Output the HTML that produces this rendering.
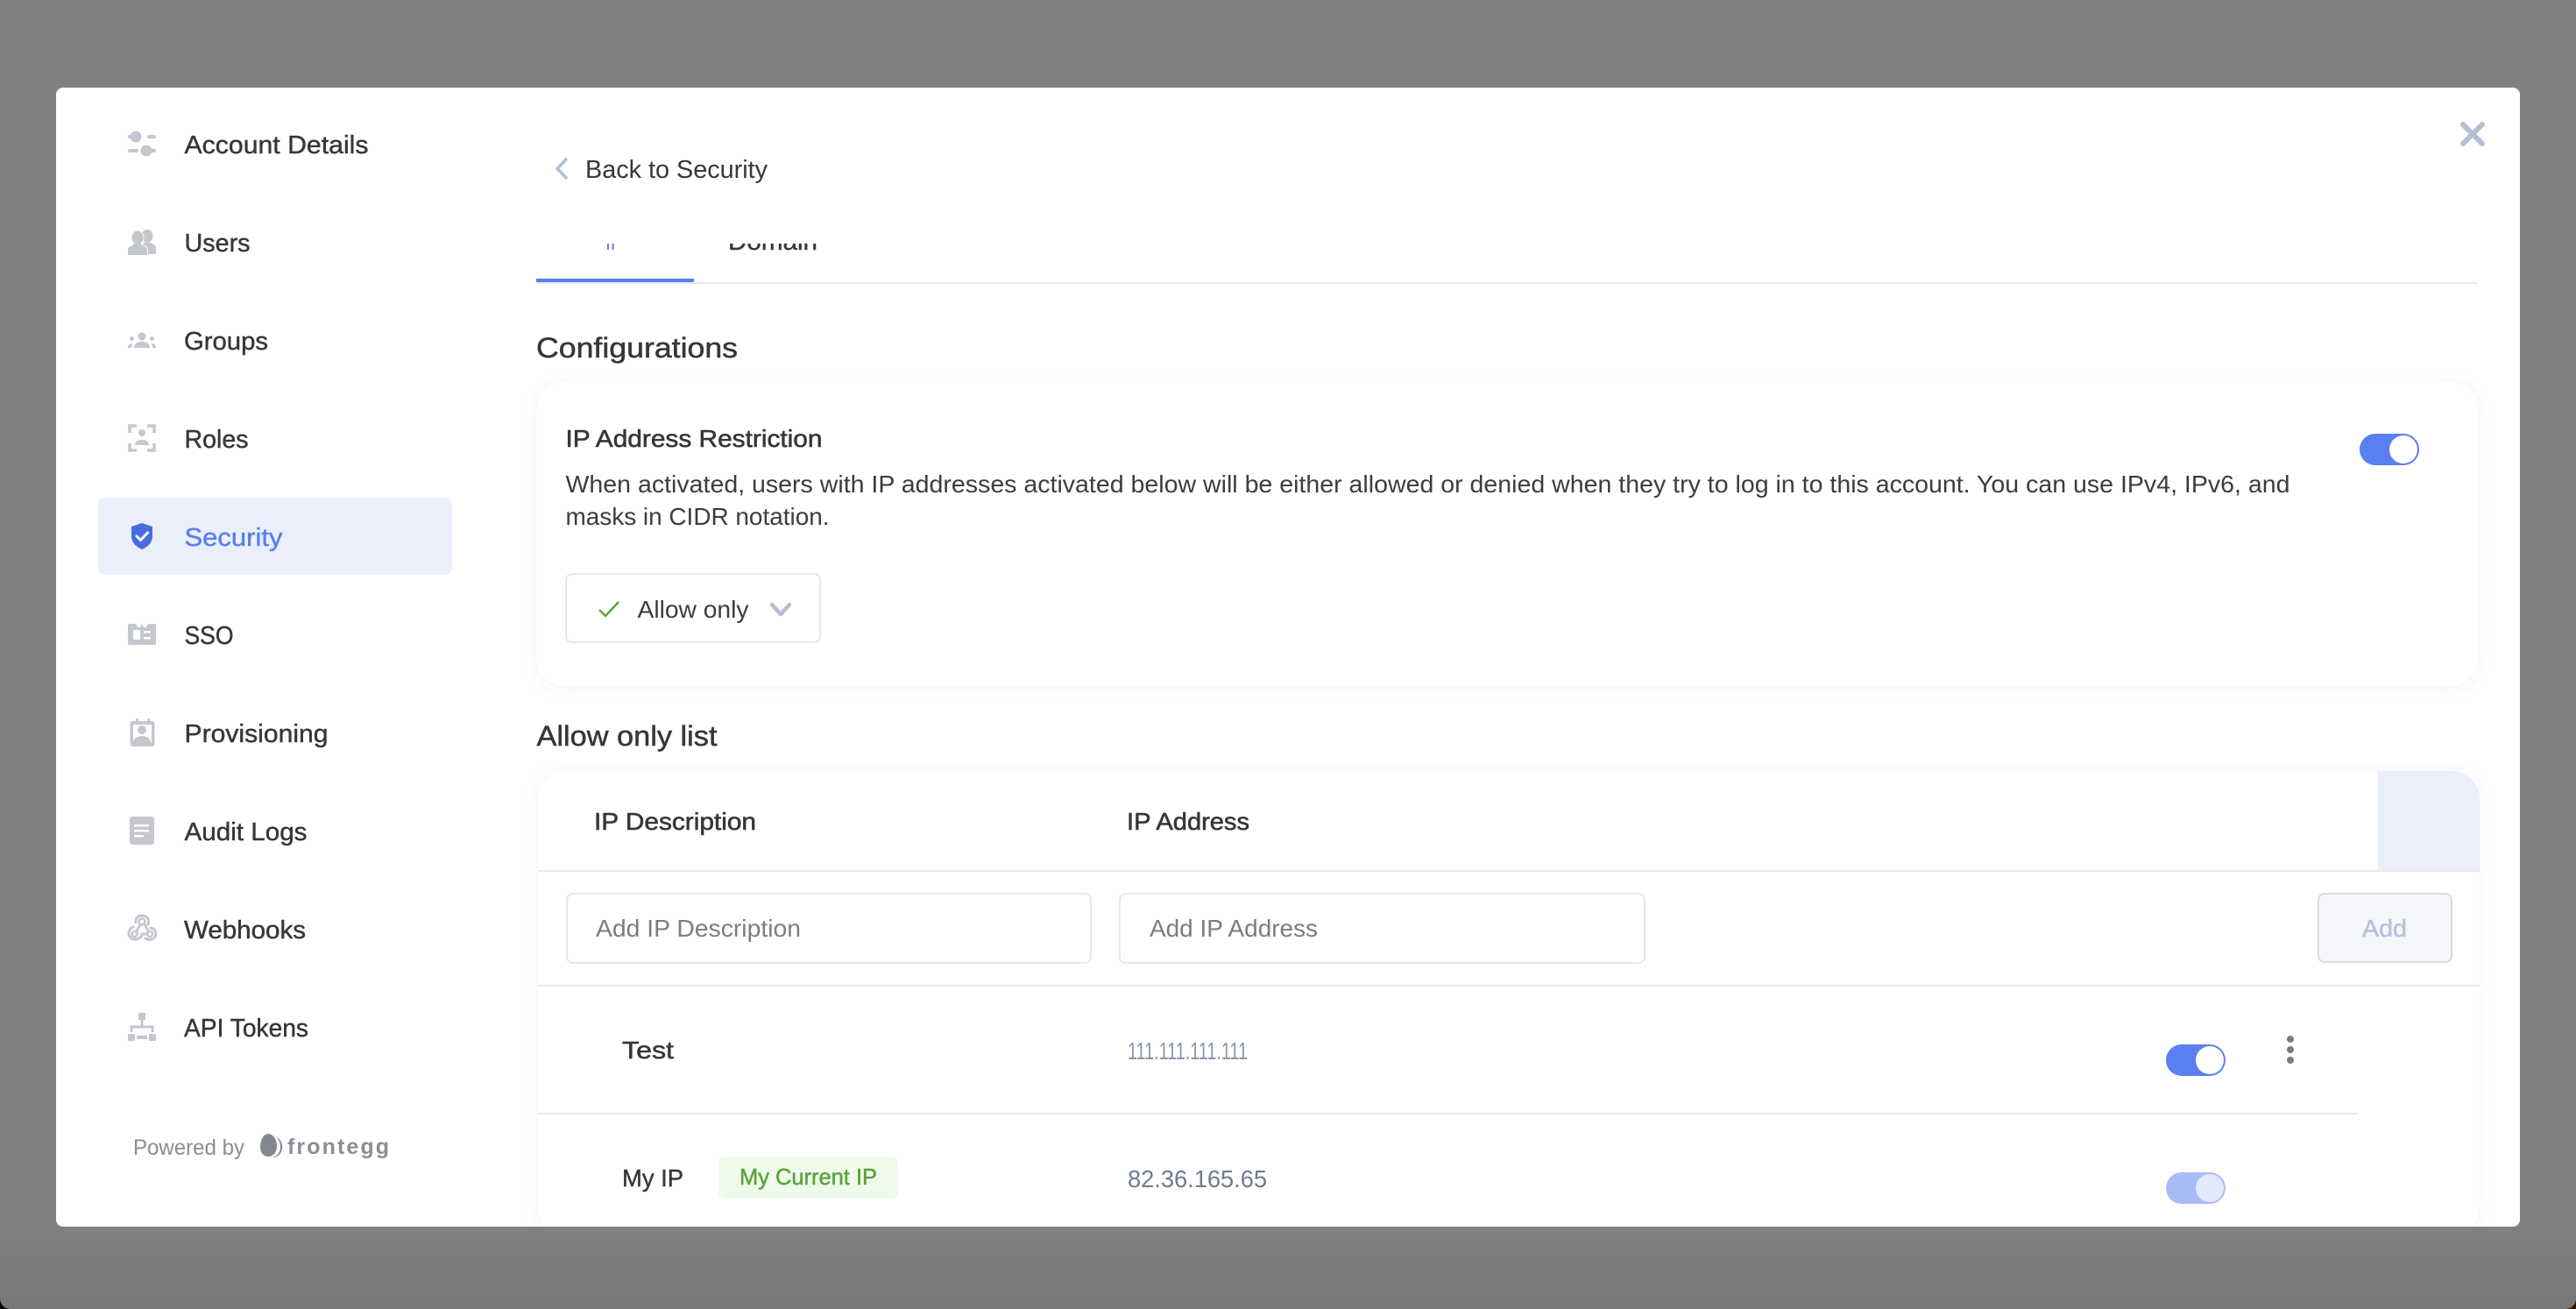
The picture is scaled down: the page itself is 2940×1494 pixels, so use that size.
<!DOCTYPE html>
<html><head><meta charset="utf-8"><title>Security</title>
<style>
html,body{margin:0;padding:0;width:2940px;height:1494px;overflow:hidden;background:#808080}
svg{position:absolute;left:0;top:0;display:block}
text{font-family:"Liberation Sans",Arial,sans-serif;font-size:29px;fill:#37373b;white-space:pre}
.nav{font-size:29px;stroke:#37373b;stroke-width:.45}
.h{font-size:32px;stroke:#37373b;stroke-width:.5}
.b{font-size:28px;stroke:#37373b;stroke-width:.6}
.p{font-size:28px;fill:#3c3c41}
.ph{font-size:28px;fill:#7b7c85}
.ip{font-size:28px;fill:#8a95aa}
.ic{fill:#c5c7cf}
</style></head>
<body>
<svg width="2940" height="1494" viewBox="0 0 2940 1494" xmlns="http://www.w3.org/2000/svg">
<defs>
<linearGradient id="bg" x1="0" y1="0" x2="0" y2="1"><stop offset="0" stop-color="#808080"/><stop offset=".94" stop-color="#808080"/><stop offset="1" stop-color="#787878"/></linearGradient>
<filter id="sh" x="-5%" y="-10%" width="110%" height="120%"><feDropShadow dx="0" dy="2" stdDeviation="8" flood-color="#5a5f78" flood-opacity=".08"/></filter>
<clipPath id="modal"><rect x="64" y="100" width="2812" height="1300" rx="8"/></clipPath>
<clipPath id="tabs"><rect x="600" y="278" width="400" height="20"/></clipPath>
<clipPath id="th"><rect x="614" y="880" width="2216" height="530" rx="32"/></clipPath>
</defs>
<rect width="2940" height="1494" fill="url(#bg)"/>
<path d="M0 1482V1494H12A12 12 0 0 1 0 1482Z" fill="#0b0b10"/>
<path d="M2940 1482V1494H2928A12 12 0 0 0 2940 1482Z" fill="#3a0e08"/>
<rect x="64" y="100" width="2812" height="1300" rx="8" fill="#fff"/>

<!-- Sidebar -->
<rect x="112" y="568" width="404" height="88" rx="8" fill="#ebeffc"/>
<!-- account details -->
<g class="ic"><rect x="146" y="154" width="5" height="4" rx="2"/><circle cx="155" cy="156" r="6.500"/><rect x="168" y="154" width="10" height="4" rx="2"/><rect x="146" y="170" width="12" height="4" rx="2"/><circle cx="167" cy="172" r="6.500"/><rect x="171" y="170" width="7" height="4" rx="2"/></g>
<!-- users -->
<g class="ic"><ellipse cx="168" cy="269.500" rx="6.500" ry="7.500"/><path d="M160 290v-9l4-4h8c3 2 6 2.500 6 6v7z"/>
<g stroke="#fff" stroke-width="2" paint-order="stroke"><ellipse cx="157" cy="271" rx="6.500" ry="7.500"/><path d="M146 291v-6c0-3.500 4-4 7.500-6.500h7c3.500 2.500 7.500 3 7.500 6.500v6z"/></g>
<ellipse cx="157" cy="271" rx="6.500" ry="7.500"/><path d="M153 275h8v5h-8z"/></g>
<!-- groups -->
<g class="ic"><circle cx="162" cy="384" r="4.500"/><path d="M153 397c0-5 3.500-7 9-7s9 2 9 7z"/><circle cx="150.500" cy="386.500" r="2.500"/><path d="M146 397c0-3 1.500-5 5-5l-1 5z"/><circle cx="173.500" cy="386.500" r="2.500"/><path d="M178 397c0-3-1.500-5-5-5l1 5z"/></g>
<!-- roles -->
<g fill="none" stroke="#c5c7cf" stroke-width="3.500"><path d="M156 486h-8v8"/><path d="M168 486h8v8"/><path d="M148 506v8h8"/><path d="M176 506v8h-8"/></g>
<g class="ic"><circle cx="162" cy="494" r="4"/><path d="M154 508c0-4 3-6 8-6s8 2 8 6z"/></g>
<!-- security -->
<path d="M162 597l12 4v11c0 7-5 12-12 15-7-3-12-8-12-15v-11z" fill="#4a6be0"/>
<path d="M156 612l4.500 4.500 8-8.500" fill="none" stroke="#fff" stroke-width="3" stroke-linecap="round" stroke-linejoin="round"/>
<!-- sso -->
<path d="M148 712h7l2 4h3l2-4 2 4h3l2-4h7a2 2 0 0 1 2 2v20a2 2 0 0 1-2 2h-28a2 2 0 0 1-2-2v-20a2 2 0 0 1 2-2z" fill="#c5c7cf"/>
<rect x="152" y="719" width="8" height="11" fill="#fff"/><rect x="164" y="720" width="8" height="2.500" fill="#fff"/><rect x="164" y="727" width="8" height="2.500" fill="#fff"/>
<!-- provisioning -->
<rect x="155" y="820" width="3" height="6" class="ic"/><rect x="168" y="820" width="3" height="6" class="ic"/>
<rect x="148.500" y="823" width="28" height="29" rx="3" class="ic"/>
<rect x="152" y="827" width="21" height="21" fill="#fff"/>
<circle cx="162" cy="833" r="5" class="ic"/><path d="M151 849c1-6 5-9 11-9s10 3 11 9z" class="ic"/>
<!-- audit -->
<rect x="148" y="932" width="28" height="32" rx="3" class="ic"/>
<g fill="#fff"><rect x="153" y="941" width="17" height="2.500"/><rect x="153" y="947" width="17" height="2.500"/><rect x="153" y="953" width="11" height="2.500"/></g>
<!-- webhooks -->
<g fill="none" stroke="#c5c7cf" stroke-width="3" stroke-linecap="round"><path d="M152 1058C145 1060 145 1072 154 1072C159 1072 162 1069 162 1066H171"/><path d="M155 1053C154 1047 159 1045 162 1045C168 1045 171 1050 169 1055"/><path d="M162 1052L154 1066"/><path d="M165 1055L171 1066"/><path d="M172 1059C178 1060 179 1067 177 1069C175 1073 169 1073 166 1071"/></g>
<g fill="#fff" stroke="#c5c7cf" stroke-width="2.500"><circle cx="162" cy="1052" r="3.500"/><circle cx="153.500" cy="1066" r="3"/><circle cx="171" cy="1066" r="3"/></g>
<!-- api -->
<g class="ic"><rect x="158" y="1156" width="8" height="8"/><rect x="146" y="1180" width="8" height="8"/><rect x="170" y="1180" width="8" height="8"/><rect x="156" y="1182" width="12" height="4"/></g>
<path d="M162 1164v7M150 1178v-6h24v6" fill="none" stroke="#c5c7cf" stroke-width="3"/>

<text class="nav" x="210.500" y="175" textLength="210" lengthAdjust="spacingAndGlyphs">Account Details</text>
<text class="nav" x="210.500" y="287" textLength="75" lengthAdjust="spacingAndGlyphs">Users</text>
<text class="nav" x="210" y="399" textLength="96" lengthAdjust="spacingAndGlyphs">Groups</text>
<text class="nav" x="210.500" y="511" textLength="73" lengthAdjust="spacingAndGlyphs">Roles</text>
<text class="nav" x="210.500" y="623" textLength="112" lengthAdjust="spacingAndGlyphs" style="fill:#5a7ff0;stroke:#5a7ff0">Security</text>
<text class="nav" x="210.500" y="735" textLength="56" lengthAdjust="spacingAndGlyphs">SSO</text>
<text class="nav" x="210.500" y="847" textLength="164" lengthAdjust="spacingAndGlyphs">Provisioning</text>
<text class="nav" x="210.500" y="959" textLength="140" lengthAdjust="spacingAndGlyphs">Audit Logs</text>
<text class="nav" x="210" y="1071" textLength="139" lengthAdjust="spacingAndGlyphs">Webhooks</text>
<text class="nav" x="210" y="1183" textLength="142" lengthAdjust="spacingAndGlyphs">API Tokens</text>

<text x="152" y="1318" textLength="127" lengthAdjust="spacingAndGlyphs" style="font-size:25px;fill:#8b8d95">Powered by</text>
<path d="M306 1294c-5 0-9 7-9 15 0 7 4 11 9 11 6 0 10-5 10-12 0-7-4-14-10-14z" fill="#85878f"/>
<path d="M314 1296c6 4 9 9 8 15-1 6-5 10-11 10 6-2 9-6 9-12 0-5-2-9-6-13z" fill="#85878f"/>
<text x="328" y="1317" textLength="116" lengthAdjust="spacing" style="font-size:25px;font-weight:bold;fill:#8b8d95">frontegg</text>

<!-- Header -->
<path d="M646 182l-10 10.500 10 10.500" fill="none" stroke="#b3bfd4" stroke-width="3.500" stroke-linecap="round" stroke-linejoin="round"/>
<text x="668" y="203" textLength="208" lengthAdjust="spacingAndGlyphs" style="font-size:29px">Back to Security</text>
<path d="M2811 142l22 22M2833 142l-22 22" fill="none" stroke="#b3bfd4" stroke-width="6" stroke-linecap="round"/>

<!-- Tabs -->
<g clip-path="url(#tabs)">
<text x="691" y="285" textLength="20" lengthAdjust="spacingAndGlyphs" style="fill:#5a7ff0">IP</text>
<text x="831" y="285" textLength="102" lengthAdjust="spacingAndGlyphs" style="stroke:#37373b;stroke-width:.4">Domain</text>
</g>
<rect x="612" y="322" width="2216" height="2" fill="#e4e8f0"/>
<rect x="612" y="318" width="180" height="4" fill="#5a7ff0"/>

<text class="h" x="612" y="408" textLength="230" lengthAdjust="spacingAndGlyphs">Configurations</text>

<!-- Config card -->
<rect x="612" y="437" width="2216" height="346" rx="32" fill="#fff" filter="url(#sh)"/>
<text class="b" x="645.500" y="510" textLength="293" lengthAdjust="spacingAndGlyphs">IP Address Restriction</text>
<text class="p" x="645.500" y="562" textLength="1968" lengthAdjust="spacingAndGlyphs">When activated, users with IP addresses activated below will be either allowed or denied when they try to log in to this account. You can use IPv4, IPv6, and</text>
<text class="p" x="645.500" y="599" textLength="301" lengthAdjust="spacingAndGlyphs">masks in CIDR notation.</text>
<rect x="2693" y="495" width="68" height="36" rx="18" fill="#5a7ff0"/>
<circle cx="2743" cy="513" r="16" fill="#fff"/>
<rect x="646" y="655" width="290" height="78" rx="7" fill="#fff" stroke="#e6e7ee" stroke-width="2"/>
<path d="M684 696l7 7 15-16" fill="none" stroke="#5ca33a" stroke-width="2.500"/>
<text class="p" x="727.500" y="705" textLength="127" lengthAdjust="spacingAndGlyphs">Allow only</text>
<path d="M881 690l10 11 10-11" fill="none" stroke="#b3bfd4" stroke-width="4.500" stroke-linecap="round" stroke-linejoin="round"/>

<text class="h" x="612.500" y="851" textLength="206" lengthAdjust="spacingAndGlyphs">Allow only list</text>

<!-- Table -->
<g clip-path="url(#modal)">
<rect x="614" y="880" width="2216" height="530" rx="32" fill="#fff" filter="url(#sh)"/>
<g clip-path="url(#th)">
<rect x="2714" y="880" width="116" height="113" fill="#ebeffc"/>
</g>
<rect x="614" y="993" width="2216" height="2" fill="#e8e8ee"/>
<text class="b" x="678" y="947" textLength="185" lengthAdjust="spacingAndGlyphs">IP Description</text>
<text class="b" x="1286" y="947" textLength="140" lengthAdjust="spacingAndGlyphs">IP Address</text>
<rect x="647" y="1020" width="598" height="79" rx="7" fill="#fff" stroke="#e6e7ee" stroke-width="2"/>
<rect x="1278" y="1020" width="599" height="79" rx="7" fill="#fff" stroke="#e6e7ee" stroke-width="2"/>
<text class="ph" x="680" y="1069" textLength="234" lengthAdjust="spacingAndGlyphs">Add IP Description</text>
<text class="ph" x="1312" y="1069" textLength="192" lengthAdjust="spacingAndGlyphs">Add IP Address</text>
<rect x="2646" y="1020" width="152" height="78" rx="7" fill="#f5f7fb" stroke="#d9dbe3" stroke-width="2"/>
<text x="2696" y="1069" textLength="51" lengthAdjust="spacingAndGlyphs" style="font-size:28px;fill:#b8c3d9;stroke:#b8c3d9;stroke-width:.6">Add</text>
<rect x="614" y="1124" width="2216" height="2" fill="#e8e9f2"/>

<text x="710" y="1208" textLength="59" lengthAdjust="spacingAndGlyphs" style="font-size:28px;stroke:#37373b;stroke-width:.5">Test</text>
<text class="ip" x="1287" y="1209" textLength="137" lengthAdjust="spacingAndGlyphs">111.111.111.111</text>
<rect x="2472" y="1192" width="68" height="36" rx="18" fill="#5a7ff0"/>
<circle cx="2522" cy="1210" r="16" fill="#fff"/>
<g fill="#7c7c80"><circle cx="2614" cy="1186" r="4"/><circle cx="2614" cy="1198" r="4"/><circle cx="2614" cy="1210" r="4"/></g>
<rect x="614" y="1270" width="2076" height="2" fill="#e8e8ee"/>

<text x="710" y="1354" textLength="70" lengthAdjust="spacingAndGlyphs" style="font-size:28px;stroke:#37373b;stroke-width:.4">My IP</text>
<rect x="820" y="1320" width="205" height="48" rx="8" fill="#effbea"/>
<text x="844" y="1352" textLength="157" lengthAdjust="spacingAndGlyphs" style="font-size:26px;fill:#5ca33a;stroke:#5ca33a;stroke-width:.5">My Current IP</text>
<text class="ip" x="1287" y="1355" textLength="159" lengthAdjust="spacingAndGlyphs" style="fill:#6f7b92">82.36.165.65</text>
<rect x="2472" y="1338" width="68" height="36" rx="18" fill="#a9bbf5"/>
<circle cx="2522" cy="1356" r="16" fill="#e3e9fc"/>
</g>
</svg>
</body></html>
